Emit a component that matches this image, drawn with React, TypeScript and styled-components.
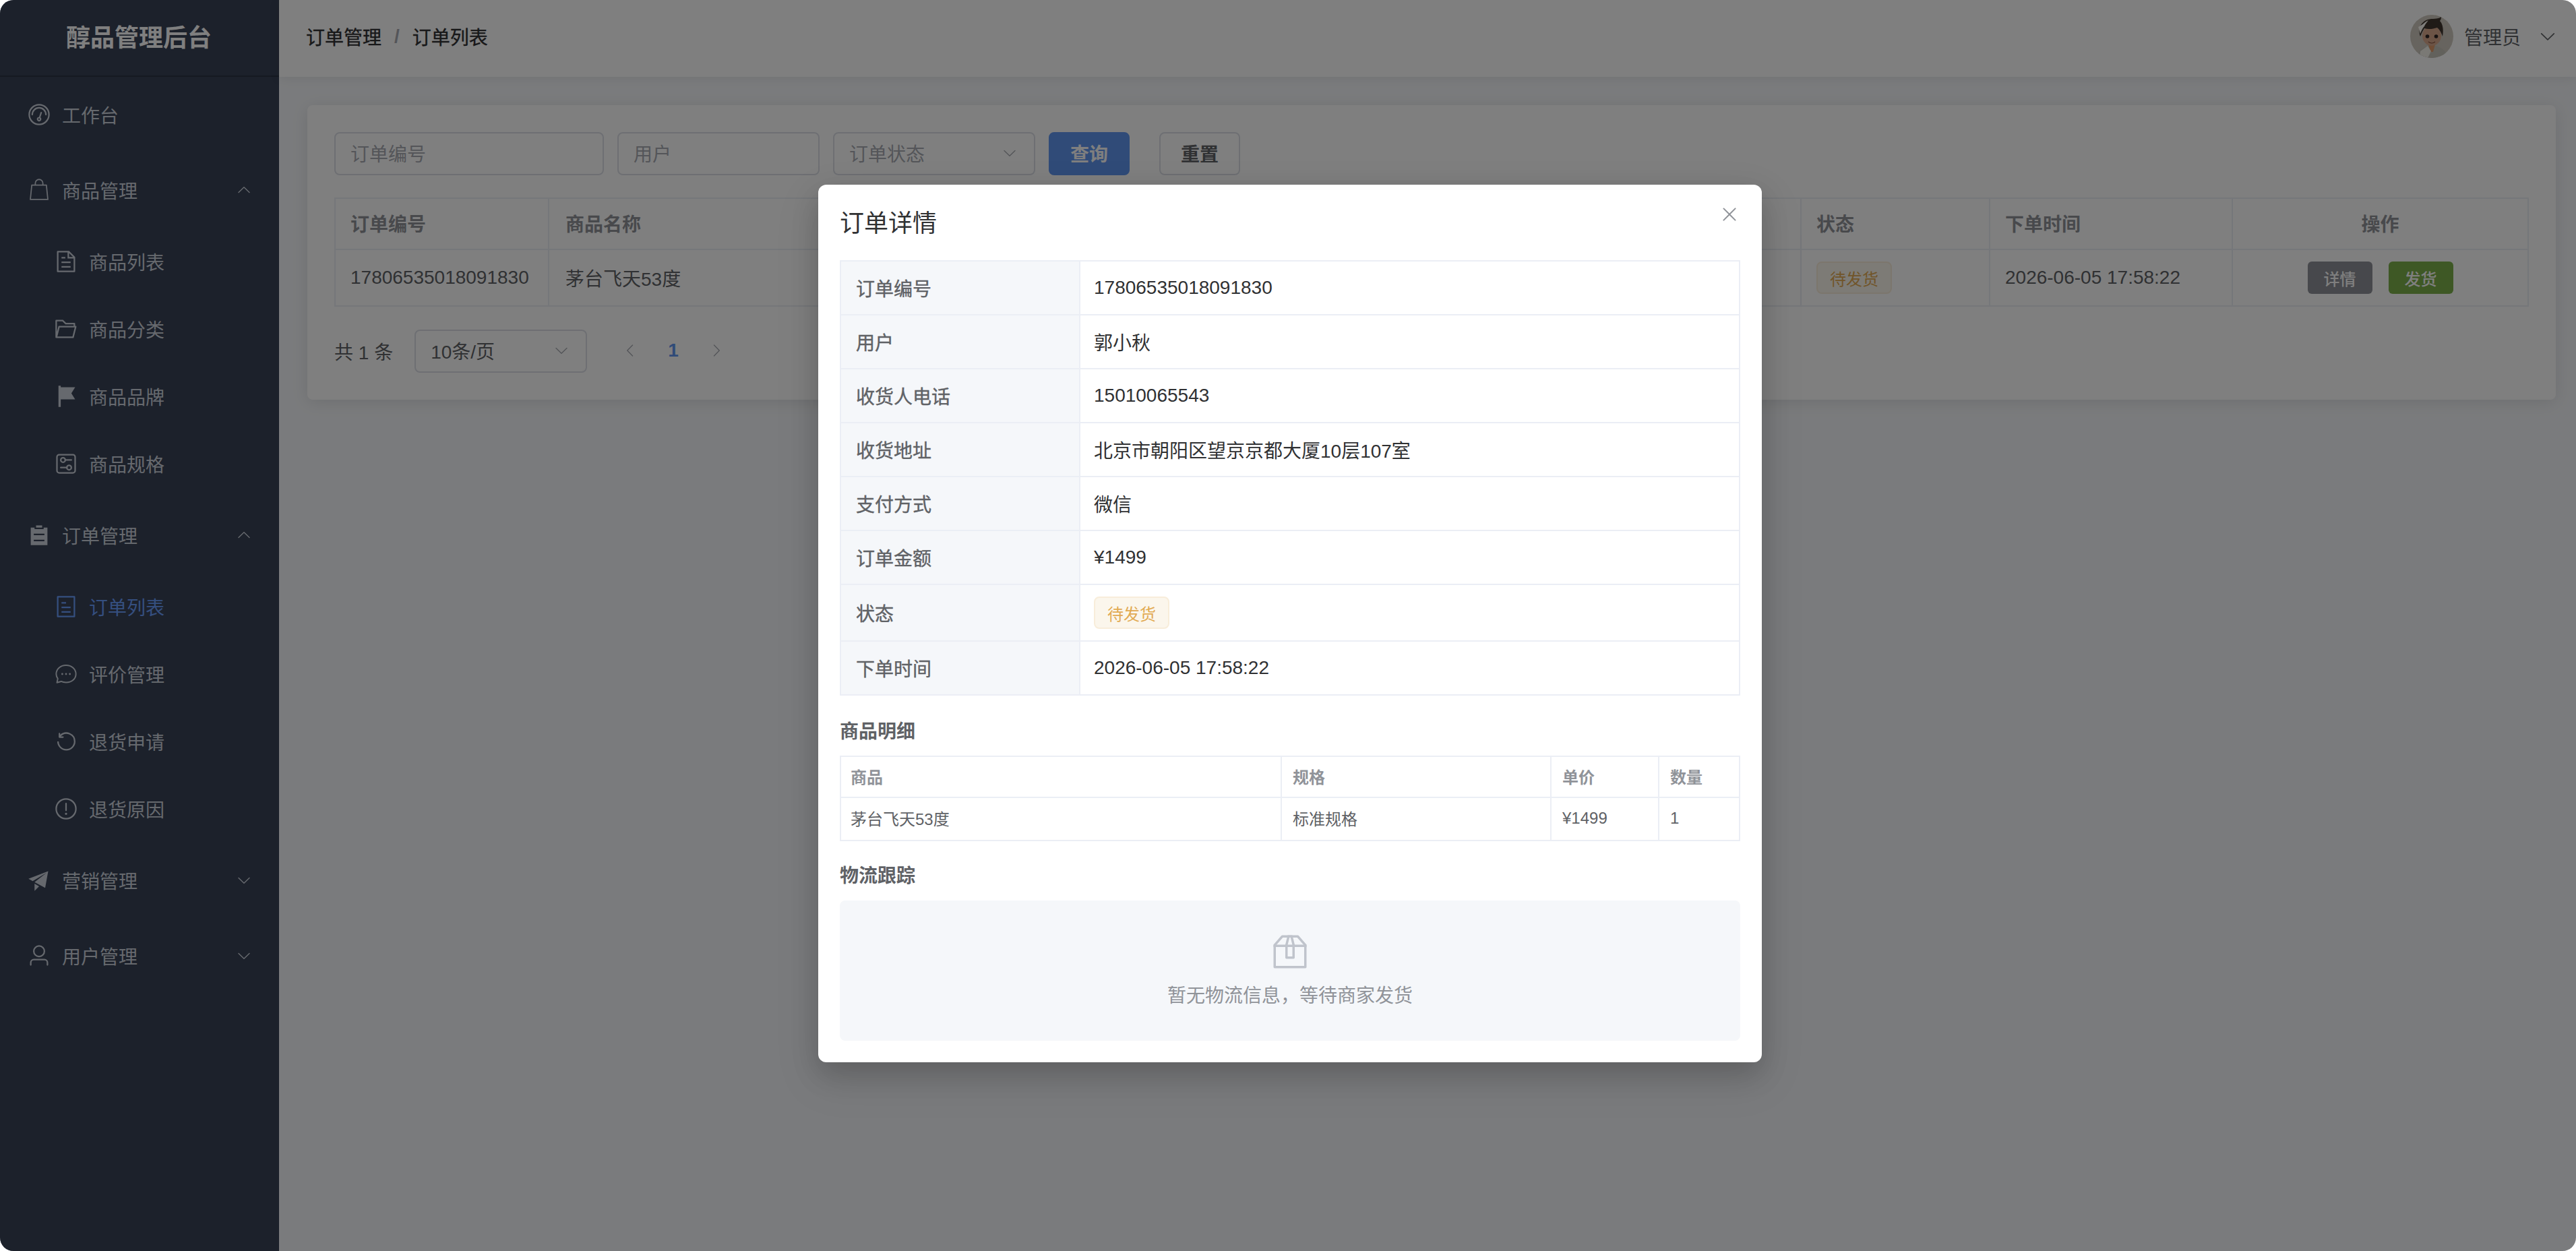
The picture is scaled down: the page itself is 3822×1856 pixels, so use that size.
import { ReactNode } from "react";
import styled, { createGlobalStyle } from "styled-components";

const GlobalStyle = createGlobalStyle`
  html, body {
    margin: 0;
    padding: 0;
    width: 100%;
    height: 100%;
    overflow: hidden;
    background: #fff;
  }
  * {
    box-sizing: border-box;
  }
  body {
    font-family: "Liberation Sans", "Noto Sans CJK SC", sans-serif;
    font-size: 28px;
    color: #606266;
  }
`;

const Shell = styled.div`
  position: relative;
  display: flex;
  width: 100vw;
  height: 100vh;
  border-radius: 20px;
  overflow: hidden;
  background: #f5f7fa;
`;

const Glyph = styled.svg<{ $size: number; $turn?: number }>`
  flex: none;
  width: ${({ $size }) => $size}px;
  height: ${({ $size }) => $size}px;
  fill: currentColor;
  transform: rotate(${({ $turn }) => $turn ?? 0}deg);
`;

const Icon = ({ size = 36, turn, children }: { size?: number; turn?: number; children: ReactNode }) => (
  <Glyph $size={size} $turn={turn} viewBox="0 0 1024 1024">
    {children}
  </Glyph>
);

const Chevron = ({ size = 24, turn = 0 }: { size?: number; turn?: number }) => (
  <Icon size={size} turn={turn}>
    <path d="M831.872 340.864 512 652.672 192.128 340.864a30.592 30.592 0 0 0-42.752 0 29.12 29.12 0 0 0 0 41.6L489.664 714.24a32 32 0 0 0 44.672 0l340.288-331.712a29.12 29.12 0 0 0 0-41.728 30.592 30.592 0 0 0-42.752 0z" />
  </Icon>
);

/* element-plus style icon set */
const icons: Record<string, ReactNode> = {
  odometer: (
    <>
      <path d="M512 896a384 384 0 1 0 0-768 384 384 0 0 0 0 768m0 64a448 448 0 1 1 0-896 448 448 0 0 1 0 896" />
      <path d="M192 512a320 320 0 1 1 640 0 32 32 0 1 1-64 0 256 256 0 1 0-512 0 32 32 0 0 1-64 0" />
      <path d="M570.432 627.84A96 96 0 1 1 509.568 608l60.992-187.776A32 32 0 1 1 631.424 440l-60.992 187.776zM502.08 734.464a32 32 0 1 0 19.84-60.928 32 32 0 0 0-19.84 60.928" />
    </>
  ),
  bag: (
    <>
      <path d="M204 304h616l62 606H142z" fill="none" stroke="currentColor" strokeWidth="50" strokeLinejoin="round" />
      <path d="M352 304v-80a160 160 0 0 1 320 0v80" fill="none" stroke="currentColor" strokeWidth="50" />
    </>
  ),
  document: (
    <path d="M832 384H576V128H192v768h640zm-26.496-64L640 154.496V320zM160 64h480l256 256v608a32 32 0 0 1-32 32H160a32 32 0 0 1-32-32V96a32 32 0 0 1 32-32m160 448h384v64H320zm0-192h160v64H320zm0 384h384v64H320z" />
  ),
  folder: (
    <path d="M878.08 448H241.92l-96 384h636.16zM832 384v-64H485.76L357.504 192H128v448l57.92-231.744A32 32 0 0 1 216.96 384zm-24.96 512H96a32 32 0 0 1-32-32V160a32 32 0 0 1 32-32h287.872l128.384 128H864a32 32 0 0 1 32 32v96h23.04a32 32 0 0 1 31.04 39.744l-112 448A32 32 0 0 1 807.04 896" />
  ),
  flag: <path d="M288 128h608L736 384l160 256H288v320h-96V64h96z" />,
  setup: (
    <>
      <path d="M224 160a64 64 0 0 0-64 64v576a64 64 0 0 0 64 64h576a64 64 0 0 0 64-64V224a64 64 0 0 0-64-64zm0-64h576a128 128 0 0 1 128 128v576a128 128 0 0 1-128 128H224A128 128 0 0 1 96 800V224A128 128 0 0 1 224 96" />
      <path d="M384 416a64 64 0 1 0 0-128 64 64 0 0 0 0 128m0 64a128 128 0 1 1 0-256 128 128 0 0 1 0 256" />
      <path d="M480 320h256q32 0 32 32t-32 32H480q-32 0-32-32t32-32m160 416a64 64 0 1 0 0-128 64 64 0 0 0 0 128m0 64a128 128 0 1 1 0-256 128 128 0 0 1 0 256" />
      <path d="M288 640h256q32 0 32 32t-32 32H288q-32 0-32-32t32-32" />
    </>
  ),
  list: <path d="M704 192h160v736H160V192h160v64h384zM288 512h448v-64H288zm0 256h448v-64H288zm96-576V96h256v96z" />,
  tickets: (
    <path d="M192 128v768h640V128zm-32-64h704a32 32 0 0 1 32 32v832a32 32 0 0 1-32 32H160a32 32 0 0 1-32-32V96a32 32 0 0 1 32-32m160 448h384v64H320zm0-192h192v64H320zm0 384h384v64H320z" />
  ),
  chat: (
    <>
      <path
        d="M512 144C277 144 96 304 96 512c0 72 26 138 68 194l-36 170 178-52c62 30 132 42 206 42 235 0 416-146 416-354S747 144 512 144z"
        fill="none"
        stroke="currentColor"
        strokeWidth="56"
        strokeLinejoin="round"
      />
      <circle cx="352" cy="512" r="40" />
      <circle cx="512" cy="512" r="40" />
      <circle cx="672" cy="512" r="40" />
    </>
  ),
  refresh: (
    <path d="M289.088 296.704h92.992a32 32 0 0 1 0 64H232.96a32 32 0 0 1-32-32V179.712a32 32 0 0 1 64 0v50.56a384 384 0 0 1 643.84 282.88 384 384 0 0 1-383.936 384 384 384 0 0 1-384-384h64a320 320 0 1 0 640 0 320 320 0 0 0-555.712-216.448z" />
  ),
  warning: (
    <path d="M512 64a448 448 0 1 1 0 896 448 448 0 0 1 0-896m0 832a384 384 0 0 0 0-768 384 384 0 0 0 0 768m48-176a48 48 0 1 1-96 0 48 48 0 0 1 96 0m-48-464a32 32 0 0 1 32 32v288a32 32 0 0 1-64 0V288a32 32 0 0 1 32-32" />
  ),
  promotion: <path d="m64 448 832-320-128 704-446.08-243.328L832 192 242.816 545.472zm256 512V657.024L512 768z" />,
  user: (
    <path d="M512 512a192 192 0 1 0 0-384 192 192 0 0 0 0 384m0 64a256 256 0 1 1 0-512 256 256 0 0 1 0 512m320 320v-96a96 96 0 0 0-96-96H288a96 96 0 0 0-96 96v96a32 32 0 1 1-64 0v-96a160 160 0 0 1 160-160h448a160 160 0 0 1 160 160v96a32 32 0 1 1-64 0" />
  ),
};

/* sidebar */
const Sidebar = styled.aside`
  flex: none;
  width: 414px;
  background: #384256;
`;

const Brand = styled.div`
  display: flex;
  align-items: center;
  justify-content: center;
  height: 114px;
  padding: 0 2px 6px 0;
  border-bottom: 2px solid #2a3242;
  color: #fff;
  font-size: 36px;
  font-weight: 700;
`;

const MenuRow = styled.div<{ $sub?: boolean; $active?: boolean }>`
  display: flex;
  align-items: center;
  gap: 16px;
  height: ${({ $sub }) => ($sub ? 100 : 112)}px;
  padding: 0 40px 0 ${({ $sub }) => ($sub ? 80 : 40)}px;
  color: ${({ $active }) => ($active ? "#6a9eff" : "#cdd3dd")};
`;

const MenuLabel = styled.span`
  flex: 1;
`;

type MenuEntry = { icon: string; label: string; open?: boolean; children?: { icon: string; label: string; active?: boolean }[] };

const menu: MenuEntry[] = [
  { icon: "odometer", label: "工作台" },
  {
    icon: "bag",
    label: "商品管理",
    open: true,
    children: [
      { icon: "document", label: "商品列表" },
      { icon: "folder", label: "商品分类" },
      { icon: "flag", label: "商品品牌" },
      { icon: "setup", label: "商品规格" },
    ],
  },
  {
    icon: "list",
    label: "订单管理",
    open: true,
    children: [
      { icon: "tickets", label: "订单列表", active: true },
      { icon: "chat", label: "评价管理" },
      { icon: "refresh", label: "退货申请" },
      { icon: "warning", label: "退货原因" },
    ],
  },
  { icon: "promotion", label: "营销管理", open: false },
  { icon: "user", label: "用户管理", open: false },
];

/* top bar */
const Main = styled.div`
  flex: 1;
  display: flex;
  flex-direction: column;
  min-width: 0;
`;

const TopBar = styled.header`
  position: relative;
  display: flex;
  flex: none;
  align-items: center;
  justify-content: space-between;
  height: 114px;
  padding: 0 28px 6px 40px;
  background: #fff;
  box-shadow: 0 2px 16px rgba(0, 0, 0, 0.08);
`;

const Crumbs = styled.div`
  display: flex;
  align-items: center;
  color: #303133;
  -webkit-text-stroke: 0.4px currentColor;
`;

const CrumbSep = styled.span`
  margin: 0 19px;
  color: #a8abb2;
  font-weight: 700;
  -webkit-text-stroke: 0;
`;

const UserBox = styled.div`
  display: flex;
  align-items: center;
  color: #606266;
`;

const UserName = styled.span`
  margin: 0 26px 0 16px;
`;

const AvatarArt = styled.svg`
  width: 64px;
  height: 64px;
  border-radius: 50%;
`;

const Avatar = () => (
  <AvatarArt viewBox="0 0 64 64">
    <rect width="64" height="64" fill="#cfc9bf" />
    <path d="M10 64c1-10 9-16 17-18h11c9 2 16 8 17 18z" fill="#c4c2b8" />
    <path d="M27 44h10l-3 11h-4z" fill="#e09a6a" />
    <path d="M15 54l11-8 5 8-5 10H14z" fill="#f4f2ea" />
    <ellipse cx="32" cy="31" rx="14" ry="15" fill="#d8a88c" />
    <path d="M15 32c-4-11 1-22 11-25 7-2 15 0 20-4 0 3-1 5-2 6 4 4 6 12 4 23-2-6-5-11-8-13-6 2-13 3-19 1-2 3-4 7-6 12z" fill="#40362f" />
    <path d="M12 18c5-2 9-7 15-10-3 4-5 6-6 9-3 3-5 8-6 11-1-4-2-7-3-10z" fill="#fffdf6" />
    <circle cx="25.5" cy="32" r="2.8" fill="#2c2422" />
    <circle cx="38.5" cy="32" r="2.8" fill="#2c2422" />
    <path d="M27 40c3 2.4 7 2.4 10 0" fill="none" stroke="#84523e" strokeWidth="1.2" />
  </AvatarArt>
);

/* list page */
const Content = styled.main`
  padding: 42px 30px 0 42px;
`;

const Card = styled.section`
  padding: 40px;
  border-radius: 8px;
  background: #fff;
  box-shadow: 0 4px 24px rgba(0, 0, 0, 0.1);
`;

const FilterRow = styled.div`
  display: flex;
  align-items: center;
  gap: 20px;
  margin-bottom: 33px;
`;

const Field = styled.div<{ $width: number; $muted?: boolean }>`
  display: flex;
  flex: none;
  align-items: center;
  justify-content: space-between;
  width: ${({ $width }) => $width}px;
  height: 64px;
  padding: 0 24px 3px 22px;
  border: 2px solid #dcdfe6;
  border-radius: 8px;
  color: ${({ $muted }) => ($muted ? "#a8abb2" : "#606266")};
`;

const FieldChevron = styled.span`
  display: flex;
  color: #a8abb2;
`;

const Button = styled.button<{ $primary?: boolean; $spaced?: boolean }>`
  flex: none;
  width: 120px;
  height: 64px;
  margin-left: ${({ $spaced }) => ($spaced ? 24 : 0)}px;
  padding: 0 0 3px;
  border: 2px solid ${({ $primary }) => ($primary ? "#6096f0" : "#dcdfe6")};
  border-radius: 8px;
  background: ${({ $primary }) => ($primary ? "#6096f0" : "#fff")};
  color: ${({ $primary }) => ($primary ? "#fff" : "#606266")};
  font: 700 28px "Liberation Sans", "Noto Sans CJK SC", sans-serif;
`;

const OrderTable = styled.div`
  border: 2px solid #ebeef5;
`;

const OrderRow = styled.div<{ $head?: boolean }>`
  display: grid;
  grid-template-columns: 317px 1858px 280px 360px 1fr;
  height: ${({ $head }) => ($head ? 76 : 82)}px;
  border-bottom: ${({ $head }) => ($head ? "2px solid #ebeef5" : "none")};
  color: ${({ $head }) => ($head ? "#909399" : "#606266")};
  font-weight: ${({ $head }) => ($head ? 700 : 400)};
`;

const OrderCell = styled.div<{ $center?: boolean; $gap?: boolean; $head?: boolean }>`
  display: flex;
  align-items: center;
  justify-content: ${({ $center }) => ($center ? "center" : "flex-start")};
  gap: ${({ $gap }) => ($gap ? 24 : 0)}px;
  padding: 0 22px ${({ $head }) => ($head ? 3 : 0)}px;
  border-right: 2px solid #ebeef5;
  white-space: nowrap;

  &:nth-child(2) {
    padding-left: 24px;
  }

  &:last-child {
    border-right: none;
  }
`;

const StatusTag = styled.span`
  display: inline-flex;
  align-items: center;
  justify-content: center;
  width: 112px;
  height: 48px;
  border: 2px solid #f8edda;
  border-radius: 8px;
  background: #fbf6ec;
  color: #e2aa52;
  font-size: 24px;
`;

const SmallButton = styled.span<{ $tone: string }>`
  display: inline-flex;
  align-items: center;
  justify-content: center;
  width: 96px;
  height: 48px;
  border-radius: 6px;
  background: ${({ $tone }) => $tone};
  color: #fff;
  font-size: 24px;
  font-weight: 500;
`;

const Pager = styled.div`
  display: flex;
  align-items: center;
  margin-top: 34px;
  color: #606266;
`;

const PagerSize = styled(Field)`
  margin-left: 32px;
`;

const PagerButton = styled.span<{ $current?: boolean }>`
  display: flex;
  align-items: center;
  justify-content: center;
  width: 64px;
  height: 64px;
  padding-bottom: 2px;
  color: ${({ $current }) => ($current ? "#6096f0" : "#a8abb2")};
  font-weight: 700;
`;

const PagerFirst = styled(PagerButton)`
  margin-left: 32px;
`;

/* order dialog */
const Mask = styled.div`
  position: absolute;
  inset: 0;
  display: flex;
  align-items: flex-start;
  justify-content: center;
  padding: 274px 0 0 6px;
  background: rgba(0, 0, 0, 0.5);
`;

const Dialog = styled.div`
  position: relative;
  width: 1400px;
  padding: 32px;
  border-radius: 12px;
  background: #fff;
  box-shadow: 0 24px 64px 8px rgba(0, 0, 0, 0.08), 0 16px 40px rgba(0, 0, 0, 0.16);
`;

const DialogTitle = styled.h2`
  margin: 2px 0 30px;
  color: #303133;
  font-size: 36px;
  font-weight: 400;
  line-height: 48px;
`;

const CloseButton = styled.span`
  position: absolute;
  top: 28px;
  right: 32px;
  display: flex;
  color: #909399;
`;

const Details = styled.div`
  border: 2px solid #ebeef5;
`;

const DetailRow = styled.div<{ $tall?: boolean }>`
  display: grid;
  grid-template-columns: 355px 1fr;
  height: ${({ $tall }) => ($tall ? 84 : 80)}px;
  border-bottom: 2px solid #ebeef5;

  &:last-child {
    height: 78px;
    border-bottom: none;
  }
`;

const DetailLabel = styled.div`
  display: flex;
  align-items: center;
  padding-left: 22px;
  border-right: 2px solid #ebeef5;
  background: #f5f7fa;
  color: #606266;
  -webkit-text-stroke: 0.4px currentColor;
`;

const DetailValue = styled.div`
  display: flex;
  align-items: center;
  padding-left: 20px;
  color: #303133;
`;

const SectionTitle = styled.h3<{ $first?: boolean }>`
  margin: ${({ $first }) => ($first ? 34 : 32)}px 0 16px;
  color: #606266;
  font-size: 28px;
  font-weight: 700;
  line-height: 40px;
`;

const GoodsTable = styled.div`
  margin-top: -1px;
  border: 2px solid #ebeef5;
`;

const GoodsRow = styled.div<{ $head?: boolean }>`
  display: grid;
  grid-template-columns: 654px 400px 160px 1fr;
  height: ${({ $head }) => ($head ? 61 : 62)}px;
  border-bottom: ${({ $head }) => ($head ? "2px solid #ebeef5" : "none")};
  color: ${({ $head }) => ($head ? "#909399" : "#606266")};
  font-size: 24px;
  font-weight: ${({ $head }) => ($head ? 700 : 400)};
`;

const GoodsCell = styled.div`
  display: flex;
  align-items: center;
  padding: 0 0 3px 16px;
  border-right: 2px solid #ebeef5;

  &:first-child {
    padding-left: 14px;
  }

  &:last-child {
    border-right: none;
  }
`;

const EmptyBox = styled.div`
  display: flex;
  flex-direction: column;
  align-items: center;
  gap: 18px;
  padding: 48px 0 46px;
  border-radius: 8px;
  background: #f5f7fa;
  color: #c0c4cc;
`;

const EmptyText = styled.div`
  color: #909399;
  line-height: 40px;
`;

const details: [string, ReactNode][] = [
  ["订单编号", "17806535018091830"],
  ["用户", "郭小秋"],
  ["收货人电话", "15010065543"],
  ["收货地址", "北京市朝阳区望京京都大厦10层107室"],
  ["支付方式", "微信"],
  ["订单金额", "¥1499"],
  ["状态", <StatusTag key="tag">待发货</StatusTag>],
  ["下单时间", "2026-06-05 17:58:22"],
];

export default function App() {
  return (
    <Shell>
      <GlobalStyle />
      <Sidebar>
        <Brand>醇品管理后台</Brand>
        {menu.map((item) => (
          <div key={item.label}>
            <MenuRow>
              <Icon>{icons[item.icon]}</Icon>
              <MenuLabel>{item.label}</MenuLabel>
              {item.open !== undefined && <Chevron turn={item.open ? 180 : 0} />}
            </MenuRow>
            {item.children?.map((child) => (
              <MenuRow key={child.label} $sub $active={child.active}>
                <Icon>{icons[child.icon]}</Icon>
                <MenuLabel>{child.label}</MenuLabel>
              </MenuRow>
            ))}
          </div>
        ))}
      </Sidebar>

      <Main>
        <TopBar>
          <Crumbs>
            订单管理
            <CrumbSep>/</CrumbSep>
            订单列表
          </Crumbs>
          <UserBox>
            <Avatar />
            <UserName>管理员</UserName>
            <Chevron size={28} />
          </UserBox>
        </TopBar>

        <Content>
          <Card>
            <FilterRow>
              <Field $width={400} $muted>订单编号</Field>
              <Field $width={300} $muted>用户</Field>
              <Field $width={300} $muted>
                订单状态
                <FieldChevron>
                  <Chevron />
                </FieldChevron>
              </Field>
              <Button $primary>查询</Button>
              <Button $spaced>重置</Button>
            </FilterRow>

            <OrderTable>
              <OrderRow $head>
                <OrderCell $head>订单编号</OrderCell>
                <OrderCell $head>商品名称</OrderCell>
                <OrderCell $head>状态</OrderCell>
                <OrderCell $head>下单时间</OrderCell>
                <OrderCell $head $center>操作</OrderCell>
              </OrderRow>
              <OrderRow>
                <OrderCell>17806535018091830</OrderCell>
                <OrderCell>茅台飞天53度</OrderCell>
                <OrderCell>
                  <StatusTag>待发货</StatusTag>
                </OrderCell>
                <OrderCell>2026-06-05 17:58:22</OrderCell>
                <OrderCell $center $gap>
                  <SmallButton $tone="#8e9098">详情</SmallButton>
                  <SmallButton $tone="#7cb04a">发货</SmallButton>
                </OrderCell>
              </OrderRow>
            </OrderTable>

            <Pager>
              共 1 条
              <PagerSize $width={256}>
                10条/页
                <FieldChevron>
                  <Chevron />
                </FieldChevron>
              </PagerSize>
              <PagerFirst>
                <Chevron turn={90} />
              </PagerFirst>
              <PagerButton $current>1</PagerButton>
              <PagerButton>
                <Chevron turn={-90} />
              </PagerButton>
            </Pager>
          </Card>
        </Content>
      </Main>

      <Mask>
        <Dialog>
          <DialogTitle>订单详情</DialogTitle>
          <CloseButton>
            <Icon size={32}>
              <path d="M764.288 214.592 512 466.88 259.712 214.592a31.936 31.936 0 0 0-45.12 45.12L466.752 512 214.528 764.224a31.936 31.936 0 1 0 45.12 45.184L512 557.184l252.288 252.288a31.936 31.936 0 0 0 45.12-45.12L557.12 512.064l252.288-252.352a31.936 31.936 0 1 0-45.12-45.184z" />
            </Icon>
          </CloseButton>

          <Details>
            {details.map(([label, value]) => (
              <DetailRow key={label} $tall={label === "状态"}>
                <DetailLabel>{label}</DetailLabel>
                <DetailValue>{value}</DetailValue>
              </DetailRow>
            ))}
          </Details>

          <SectionTitle $first>商品明细</SectionTitle>
          <GoodsTable>
            <GoodsRow $head>
              <GoodsCell>商品</GoodsCell>
              <GoodsCell>规格</GoodsCell>
              <GoodsCell>单价</GoodsCell>
              <GoodsCell>数量</GoodsCell>
            </GoodsRow>
            <GoodsRow>
              <GoodsCell>茅台飞天53度</GoodsCell>
              <GoodsCell>标准规格</GoodsCell>
              <GoodsCell>¥1499</GoodsCell>
              <GoodsCell>1</GoodsCell>
            </GoodsRow>
          </GoodsTable>

          <SectionTitle>物流跟踪</SectionTitle>
          <EmptyBox>
            <Icon size={56}>
              <path d="M317.056 128 128 344.064V896h768V344.064L706.944 128zm-14.528-64h418.944a32 32 0 0 1 24.064 10.88l206.528 236.096A32 32 0 0 1 960 332.032V928a32 32 0 0 1-32 32H96a32 32 0 0 1-32-32V332.032a32 32 0 0 1 7.936-21.12L278.4 75.008A32 32 0 0 1 302.528 64z" />
              <path d="M64 320h896v64H64z" />
              <path d="M448 327.872V640h128V327.872L526.08 128h-28.16zM448 64h128l64 256v352a32 32 0 0 1-32 32H416a32 32 0 0 1-32-32V320z" />
            </Icon>
            <EmptyText>暂无物流信息，等待商家发货</EmptyText>
          </EmptyBox>
        </Dialog>
      </Mask>
    </Shell>
  );
}
